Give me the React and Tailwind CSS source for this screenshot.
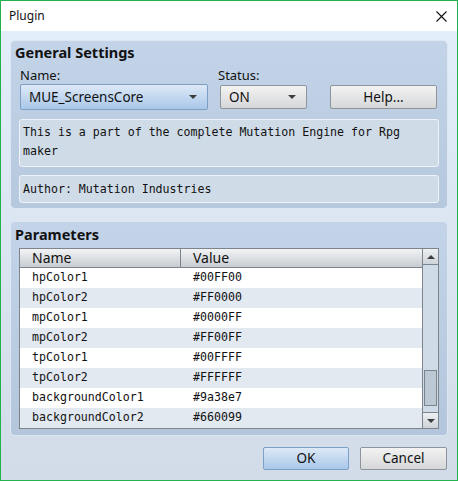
import React from "react";

const ui = "font-['Noto_Sans',sans-serif]";
const mono = "font-['DejaVu_Sans_Mono',monospace]";

const params = [
  ["hpColor1", "#00FF00"],
  ["hpColor2", "#FF0000"],
  ["mpColor1", "#0000FF"],
  ["mpColor2", "#FF00FF"],
  ["tpColor1", "#00FFFF"],
  ["tpColor2", "#FFFFFF"],
  ["backgroundColor1", "#9a38e7"],
  ["backgroundColor2", "#660099"],
];

function Caret({ up }) {
  return (
    <svg width="8" height="4" viewBox="0 0 8 4" className="shrink-0">
      <path d={up ? "M0 4 L4 0 L8 4 Z" : "M0 0 L8 0 L4 4 Z"} fill="#3c3c3c" />
    </svg>
  );
}

function Dropdown({ label, blue, className }) {
  const skin = blue
    ? "border-[#7c9fc6] bg-gradient-to-b from-[#dde9f7] to-[#a9c7e8]"
    : "border-[#8e949b] bg-gradient-to-b from-[#f3f3f3] to-[#d6d7d9]";
  return (
    <div className={`flex items-center justify-between rounded-[2px] border pl-[8px] pr-[10px] text-[13.5px] text-[#111] ${skin} ${className}`}>
      <span>{label}</span>
      <Caret />
    </div>
  );
}

function Button({ label, blue, className }) {
  const skin = blue
    ? "border-[#7c9fc6] bg-gradient-to-b from-[#dde9f7] to-[#a9c7e8]"
    : "border-[#8e949b] bg-gradient-to-b from-[#f3f3f3] to-[#d6d7d9]";
  return (
    <div className={`flex items-center justify-center rounded-[2px] border text-[13.5px] text-[#111] ${skin} ${className}`}>
      {label}
    </div>
  );
}

export default function App() {
  return (
    <div className={`flex h-[481px] w-[458px] flex-col border border-[#22b14c] ${ui}`}>
      {/* title bar */}
      <div className="flex h-[30px] items-center justify-between bg-white pl-[8px] pr-[10px]">
        <span className="text-[12px] text-[#111]">Plugin</span>
        <svg width="11" height="11" viewBox="0 0 11 11">
          <path d="M0.5 0.5 L10.5 10.5 M10.5 0.5 L0.5 10.5" stroke="#111" strokeWidth="1.1" />
        </svg>
      </div>

      <div className="flex flex-1 flex-col bg-gradient-to-b from-[#e3eefb] to-[#d2dce8] px-[9px] pt-[9px]">
        {/* General Settings */}
        <div className="flex h-[169px] flex-col rounded-[5px] border border-[#dce7f3] bg-gradient-to-b from-[#c3d4e9] to-[#b6c8dd] px-[8px]">
          <div className="-ml-[4px] h-[25px] pt-[1px] text-[14.5px] font-bold leading-[20px] text-[#111]">General Settings</div>
          <div className="flex h-[18px] text-[13px] leading-[18px] text-[#111]">
            <span className="w-[199px] pl-[1px]">Name:</span>
            <span>Status:</span>
          </div>
          <div className="flex h-[26px] items-center">
            <Dropdown label="MUE_ScreensCore" blue className="ml-[1px] h-[26px] w-[188px]" />
            <Dropdown label="ON" className="ml-[12px] h-[24px] w-[87px]" />
            <Button label="Help..." className="ml-[23px] h-[24px] w-[107px]" />
          </div>
          <div className={`mt-[9px] h-[48px] rounded-[3px] border border-[#eef3f9] bg-[#cfdbe7] px-[3px] pt-[3px] text-[11.6px] leading-[19px] text-[#111] ${mono}`}>
            This is a part of the complete Mutation Engine for Rpg maker
          </div>
          <div className={`mt-[8px] h-[28px] rounded-[3px] border border-[#eef3f9] bg-[#cfdbe7] px-[3px] text-[11.6px] leading-[26px] text-[#111] ${mono}`}>
            Author: Mutation Industries
          </div>
        </div>

        {/* Parameters */}
        <div className="mt-[12px] flex h-[215px] flex-col rounded-[5px] border border-[#dce7f3] bg-gradient-to-b from-[#c3d4e9] to-[#b4c6db] px-[8px]">
          <div className="-ml-[4px] h-[26px] pt-[2px] text-[14.5px] font-bold leading-[20px] text-[#111]">Parameters</div>
          <div className="flex h-[181px]">
            <div className="flex w-[404px] flex-col border border-r-0 border-[#7d848c]">
              <div className="flex h-[19px] border-b border-[#7d848c] bg-gradient-to-b from-[#f2f3f4] to-[#c8cdd3] text-[14px] leading-[18px] text-[#111]">
                <span className="w-[161px] border-r border-[#7d848c] pl-[12px]">Name</span>
                <span className="pl-[12px]">Value</span>
              </div>
              {params.map(([name, value], i) => (
                <div
                  key={name}
                  className={`flex h-[20px] items-center text-[11.6px] text-[#111] ${mono} ${i % 2 ? "bg-[#e2e9f1]" : "bg-white"}`}
                >
                  <span className="w-[161px] pl-[12px]">{name}</span>
                  <span className="pl-[12px]">{value}</span>
                </div>
              ))}
            </div>
            {/* scrollbar */}
            <div className="flex w-[17px] flex-col border border-[#7d848c] bg-[#cfdbe6]">
              <div className="flex h-[16px] items-center justify-center border-b border-[#7d848c] bg-gradient-to-b from-[#eef0f2] to-[#cdd3d9]">
                <Caret up />
              </div>
              <div className="flex-1 px-[1px] pt-[105px]">
                <div className="h-[36px] border border-[#7d848c] bg-[#bcc8d4]" />
              </div>
              <div className="flex h-[16px] items-center justify-center border-t border-[#7d848c] bg-gradient-to-b from-[#eef0f2] to-[#cdd3d9]">
                <Caret />
              </div>
            </div>
          </div>
        </div>

        {/* dialog buttons */}
        <div className="mt-[11px] flex justify-end gap-[11px] pr-[1px]">
          <Button label="OK" blue className="h-[23px] w-[86px]" />
          <Button label="Cancel" className="h-[23px] w-[87px]" />
        </div>
      </div>
    </div>
  );
}
